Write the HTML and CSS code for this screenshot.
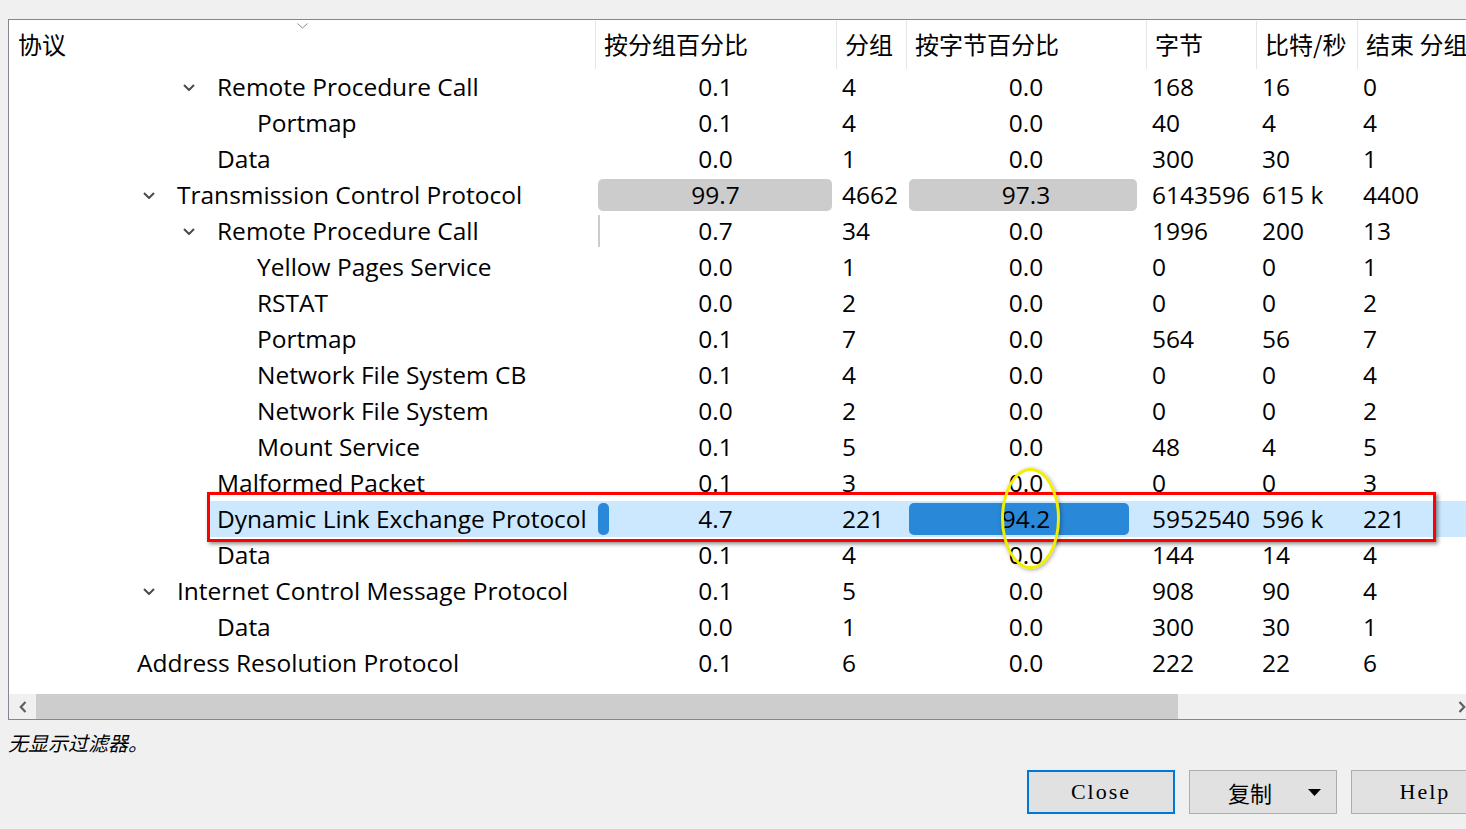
FILE: index.html
```html
<!DOCTYPE html>
<html lang="zh">
<head>
<meta charset="utf-8">
<title>协议分级统计</title>
<link rel="stylesheet" href="styles.css">
</head>
<body>
<div class="frame">
  <div class="grid head">
    <div class="hc first">协议<svg class="sort" width="11" height="6" viewBox="0 0 11 6"><path d="M0.5 0.5 L5.5 5 L10.5 0.5" fill="none" stroke="#8a8a8a" stroke-width="1"/></svg></div>
    <div class="hc">按分组百分比</div>
    <div class="hc">分组</div>
    <div class="hc">按字节百分比</div>
    <div class="hc">字节</div>
    <div class="hc">比特/秒</div>
    <div class="hc">结束 分组</div>
  </div>

  <div class="rows">
    <div class="grid row">
      <div class="name l2"><span class="tw"><svg width="12" height="7" viewBox="0 0 12 7"><path d="M1 1 L6 6 L11 1" fill="none" stroke="#4a4a4a" stroke-width="2"/></svg></span><span class="lbl">Remote Procedure Call</span></div>
      <div class="pct"><span class="txt">0.1</span></div><div class="num">4</div>
      <div class="pct"><span class="txt">0.0</span></div><div class="num">168</div><div class="num">16</div><div class="num">0</div>
    </div>
    <div class="grid row">
      <div class="name l3"><span class="tw"></span><span class="lbl">Portmap</span></div>
      <div class="pct"><span class="txt">0.1</span></div><div class="num">4</div>
      <div class="pct"><span class="txt">0.0</span></div><div class="num">40</div><div class="num">4</div><div class="num">4</div>
    </div>
    <div class="grid row">
      <div class="name l2"><span class="tw"></span><span class="lbl">Data</span></div>
      <div class="pct"><span class="txt">0.0</span></div><div class="num">1</div>
      <div class="pct"><span class="txt">0.0</span></div><div class="num">300</div><div class="num">30</div><div class="num">1</div>
    </div>
    <div class="grid row">
      <div class="name l1"><span class="tw"><svg width="12" height="7" viewBox="0 0 12 7"><path d="M1 1 L6 6 L11 1" fill="none" stroke="#4a4a4a" stroke-width="2"/></svg></span><span class="lbl">Transmission Control Protocol</span></div>
      <div class="pct"><span class="bar" style="width:99.7%"></span><span class="txt">99.7</span></div><div class="num">4662</div>
      <div class="pct"><span class="bar" style="width:97.3%"></span><span class="txt">97.3</span></div><div class="num">6143596</div><div class="num">615 k</div><div class="num">4400</div>
    </div>
    <div class="grid row">
      <div class="name l2"><span class="tw"><svg width="12" height="7" viewBox="0 0 12 7"><path d="M1 1 L6 6 L11 1" fill="none" stroke="#4a4a4a" stroke-width="2"/></svg></span><span class="lbl">Remote Procedure Call</span></div>
      <div class="pct"><span class="bar thin" style="width:0.7%"></span><span class="txt">0.7</span></div><div class="num">34</div>
      <div class="pct"><span class="txt">0.0</span></div><div class="num">1996</div><div class="num">200</div><div class="num">13</div>
    </div>
    <div class="grid row">
      <div class="name l3"><span class="tw"></span><span class="lbl">Yellow Pages Service</span></div>
      <div class="pct"><span class="txt">0.0</span></div><div class="num">1</div>
      <div class="pct"><span class="txt">0.0</span></div><div class="num">0</div><div class="num">0</div><div class="num">1</div>
    </div>
    <div class="grid row">
      <div class="name l3"><span class="tw"></span><span class="lbl">RSTAT</span></div>
      <div class="pct"><span class="txt">0.0</span></div><div class="num">2</div>
      <div class="pct"><span class="txt">0.0</span></div><div class="num">0</div><div class="num">0</div><div class="num">2</div>
    </div>
    <div class="grid row">
      <div class="name l3"><span class="tw"></span><span class="lbl">Portmap</span></div>
      <div class="pct"><span class="txt">0.1</span></div><div class="num">7</div>
      <div class="pct"><span class="txt">0.0</span></div><div class="num">564</div><div class="num">56</div><div class="num">7</div>
    </div>
    <div class="grid row">
      <div class="name l3"><span class="tw"></span><span class="lbl">Network File System CB</span></div>
      <div class="pct"><span class="txt">0.1</span></div><div class="num">4</div>
      <div class="pct"><span class="txt">0.0</span></div><div class="num">0</div><div class="num">0</div><div class="num">4</div>
    </div>
    <div class="grid row">
      <div class="name l3"><span class="tw"></span><span class="lbl">Network File System</span></div>
      <div class="pct"><span class="txt">0.0</span></div><div class="num">2</div>
      <div class="pct"><span class="txt">0.0</span></div><div class="num">0</div><div class="num">0</div><div class="num">2</div>
    </div>
    <div class="grid row">
      <div class="name l3"><span class="tw"></span><span class="lbl">Mount Service</span></div>
      <div class="pct"><span class="txt">0.1</span></div><div class="num">5</div>
      <div class="pct"><span class="txt">0.0</span></div><div class="num">48</div><div class="num">4</div><div class="num">5</div>
    </div>
    <div class="grid row">
      <div class="name l2"><span class="tw"></span><span class="lbl">Malformed Packet</span></div>
      <div class="pct"><span class="txt">0.1</span></div><div class="num">3</div>
      <div class="pct"><span class="txt">0.0</span></div><div class="num">0</div><div class="num">0</div><div class="num">3</div>
    </div>
    <div class="grid row sel">
      <div class="name l2"><span class="tw"></span><span class="lbl">Dynamic Link Exchange Protocol</span></div>
      <div class="pct"><span class="bar blue" style="width:4.7%"></span><span class="txt">4.7</span></div><div class="num">221</div>
      <div class="pct"><span class="bar blue" style="width:94.2%"></span><span class="txt">94.2</span></div><div class="num">5952540</div><div class="num">596 k</div><div class="num">221</div>
    </div>
    <div class="grid row">
      <div class="name l2"><span class="tw"></span><span class="lbl">Data</span></div>
      <div class="pct"><span class="txt">0.1</span></div><div class="num">4</div>
      <div class="pct"><span class="txt">0.0</span></div><div class="num">144</div><div class="num">14</div><div class="num">4</div>
    </div>
    <div class="grid row">
      <div class="name l1"><span class="tw"><svg width="12" height="7" viewBox="0 0 12 7"><path d="M1 1 L6 6 L11 1" fill="none" stroke="#4a4a4a" stroke-width="2"/></svg></span><span class="lbl">Internet Control Message Protocol</span></div>
      <div class="pct"><span class="txt">0.1</span></div><div class="num">5</div>
      <div class="pct"><span class="txt">0.0</span></div><div class="num">908</div><div class="num">90</div><div class="num">4</div>
    </div>
    <div class="grid row">
      <div class="name l2"><span class="tw"></span><span class="lbl">Data</span></div>
      <div class="pct"><span class="txt">0.0</span></div><div class="num">1</div>
      <div class="pct"><span class="txt">0.0</span></div><div class="num">300</div><div class="num">30</div><div class="num">1</div>
    </div>
    <div class="grid row">
      <div class="name l0"><span class="tw"></span><span class="lbl">Address Resolution Protocol</span></div>
      <div class="pct"><span class="txt">0.1</span></div><div class="num">6</div>
      <div class="pct"><span class="txt">0.0</span></div><div class="num">222</div><div class="num">22</div><div class="num">6</div>
    </div>
  </div>

  <div class="hscroll">
    <div class="arrow"><svg width="8" height="12" viewBox="0 0 8 12"><path d="M6.5 1 L1.8 6 L6.5 11" fill="none" stroke="#606060" stroke-width="2.2"/></svg></div>
    <div class="thumb"></div>
    <div class="track"></div>
    <div class="arrow right"><svg width="8" height="12" viewBox="0 0 8 12"><path d="M1.5 1 L6.2 6 L1.5 11" fill="none" stroke="#606060" stroke-width="2.2"/></svg></div>
  </div>
</div>

<div class="status">无显示过滤器。</div>

<div class="buttons">
  <button class="btn default">Close</button>
  <button class="btn split"><span class="btxt">复制</span><svg class="drop" width="13" height="7" viewBox="0 0 13 7"><path d="M0 0 L13 0 L6.5 7 Z" fill="#000"/></svg></button>
  <button class="btn">Help</button>
</div>

<div class="mark-rect"></div>
<div class="mark-ellipse"></div>
</body>
</html>
```

FILE: styles.css
```css
html, body {
  margin: 0;
  padding: 0;
}
body {
  width: 1466px;
  height: 829px;
  overflow: hidden;
  background: #f0f0f0;
  padding: 19px 0 0 8px;
  box-sizing: border-box;
  font-family: "Open Sans", "Noto Sans CJK SC", sans-serif;
  color: #000;
}

.frame {
  width: 1500px;
  border: 1px solid #828790;
  background: #fff;
}

.grid {
  display: grid;
  grid-template-columns: 586px 241px 70px 240px 110px 101px 151px;
}

/* header */
.head {
  height: 49px;
}
.hc {
  position: relative;
  display: flex;
  align-items: center;
  padding-left: 8px;
  font-family: "Noto Sans CJK SC", sans-serif;
  font-size: 24px;
  border-left: 1px solid #e5e5e5;
  margin: 1px 0 0;
  padding-bottom: 3px;
  white-space: nowrap;
}
.hc.first {
  border-left: none;
  padding-left: 9px;
}
.sort {
  position: absolute;
  left: 288px;
  top: 2px;
}

/* rows */
.row {
  height: 36px;
  font-size: 24.5px;
  line-height: 35px;
  white-space: nowrap;
}
.name {
  display: flex;
  align-items: stretch;
}
.l0 { padding-left: 88px; }
.l1 { padding-left: 128px; }
.l2 { padding-left: 168px; }
.l3 { padding-left: 208px; }
.tw {
  width: 40px;
  flex: none;
  display: flex;
  align-items: center;
  padding-left: 6px;
  padding-top: 1px;
  box-sizing: border-box;
}
.lbl {
  flex: 1;
}
.pct {
  display: grid;
  padding: 2px 3px;
  box-sizing: border-box;
}
.pct .bar, .pct .txt {
  grid-area: 1 / 1;
}
.bar {
  justify-self: start;
  background: #cccccc;
  border-radius: 5px;
}
.bar.thin {
  border-radius: 0;
}
.bar.blue {
  background: #2a88d8;
}
.txt {
  justify-self: center;
  line-height: 31px;
  position: relative;
}
.num {
  padding-left: 6px;
}

/* selection */
.sel .lbl {
  margin-left: -7px;
  padding-left: 7px;
  background: #cce8ff;
}
.sel .pct, .sel .num {
  background: #cce8ff;
}

/* horizontal scrollbar */
.hscroll {
  margin-top: 13px;
  height: 25px;
  display: flex;
  background: #f0f0f0;
}
.arrow {
  width: 27px;
  flex: none;
  display: flex;
  align-items: center;
  justify-content: center;
}
.arrow.right {
  margin-right: 34px;
}
.thumb {
  width: 1142px;
  flex: none;
  background: #cdcdcd;
}
.track {
  flex: 1;
}

/* status */
.status {
  margin-top: 10px;
  height: 26px;
  line-height: 26px;
  font-family: "Noto Sans CJK SC", sans-serif;
  font-size: 20px;
  font-style: italic;
}

/* buttons */
.buttons {
  margin-top: 14px;
  margin-left: 1019px;
  display: flex;
  gap: 14px;
  width: 600px;
}
.btn {
  width: 148px;
  height: 44px;
  flex: none;
  background: #e1e1e1;
  border: 1px solid #adadad;
  font-family: "Liberation Serif", "Noto Sans CJK SC", serif;
  font-size: 22px;
  letter-spacing: 2px;
  color: #000;
  padding: 0;
  margin: 0;
  display: flex;
  align-items: center;
  justify-content: center;
  box-sizing: border-box;
}
.btn.default {
  border: 2px solid #0078d7;
}
.btn.split {
  justify-content: flex-start;
  padding-left: 38px;
}
.btn.split .btxt {
  font-family: "Noto Sans CJK SC", sans-serif;
  font-size: 22px;
  letter-spacing: 0;
}
.drop {
  margin-left: 36px;
}

/* annotations drawn over the screenshot */
.mark-rect {
  position: absolute;
  left: 207px;
  top: 492px;
  width: 1229px;
  height: 50px;
  border: 3px solid #ff0000;
  box-sizing: border-box;
  box-shadow: 2px 2px 4px rgba(0, 0, 0, 0.45);
}
.mark-ellipse {
  position: absolute;
  left: 1001px;
  top: 468px;
  width: 59px;
  height: 101px;
  border: 3px solid #f2ee00;
  border-radius: 50%;
  box-sizing: border-box;
  box-shadow: 1px 1px 4px rgba(0, 0, 0, 0.35);
}
```
